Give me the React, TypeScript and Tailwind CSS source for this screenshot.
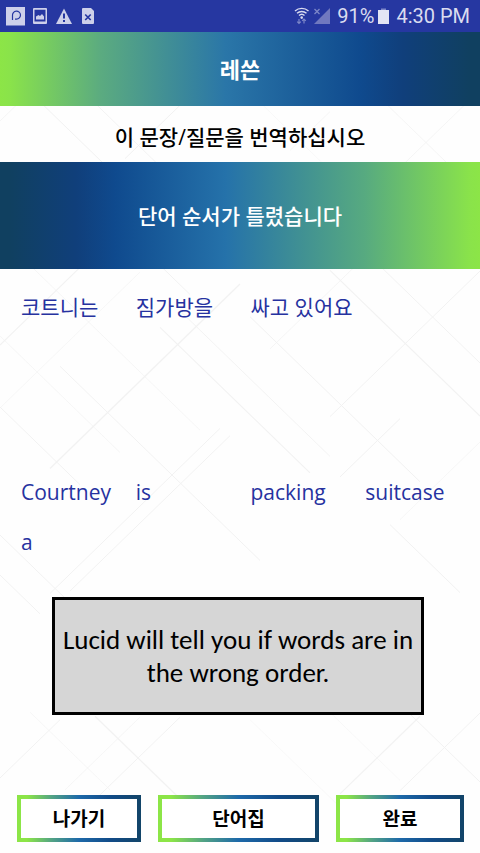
import React from "react";

const RISE = 466;

// Thin diagonals of the backdrop: [y at the left edge, x start, x end, line width]
const falling: [number, number, number, number][] = [
  [63, 35, 110, 1], [11, 90, 200, 0.9], [-271, 380, 480, 0.8], [-150, 260, 360, 0.5],
  [236, 30, 200, 0.7], [336, 0, 120, 0.7], [308, 60, 260, 1], [407, 0, 80, 1],
  [172, 160, 310, 1.1], [136, 180, 330, 0.9], [110, 140, 190, 1], [74, 250, 420, 1],
  [-50, 330, 480, 1.2], [-103, 380, 480, 1], [535, 0, 70, 1], [575, 0, 40, 1],
  [624, 95, 180, 1.2], [683, 30, 110, 0.6], [477, 250, 340, 0.5], [392, 330, 400, 0.5],
  [316, 410, 480, 1], [146, 390, 460, 1],
];
const rising: [number, number, number, number][] = [
  [121, 0, 25, 0.8], [280, 125, 180, 1], [432, 290, 330, 0.7], [556, 400, 480, 0.8],
  [345, 0, 80, 1.1], [408, 0, 140, 0.6], [517, 50, 240, 1.2], [611, 270, 360, 0.8],
  [642, 50, 220, 1], [659, 70, 230, 1], [737, 330, 480, 1], [807, 340, 400, 1],
  [908, 400, 480, 0.6], [778, 0, 60, 1], [853, 65, 140, 0.7], [892, 70, 180, 1],
  [1124, 340, 420, 1.1], [1179, 400, 480, 1],
];

function Backdrop() {
  const slope = RISE / 480;
  return (
    <svg
      className="absolute inset-0 -z-10 h-full w-full"
      viewBox="0 0 480 853"
      preserveAspectRatio="xMidYMid slice"
      aria-hidden="true"
      stroke="#f2f2f2"
      fill="none"
    >
      {falling.map(([c, a, b, w], i) => (
        <path key={"f" + i} strokeWidth={w} d={`M${a} ${c + slope * a}L${b} ${c + slope * b}`} />
      ))}
      {rising.map(([c, a, b, w], i) => (
        <path key={"r" + i} strokeWidth={w} d={`M${a} ${c - slope * a}L${b} ${c - slope * b}`} />
      ))}
    </svg>
  );
}

function StatusBar() {
  return (
    <div className="flex h-8 items-center justify-between bg-[#2637a1] pr-[10px] pl-[6px] font-['Roboto',sans-serif] text-xl text-[#dadcf0]">
      <svg width="90" height="32" viewBox="0 0 90 32" fill="#cdd0ea" aria-hidden="true">
        <path d="M0 7h19v18.500H0z" />
        <path d="M6.500 20v-4.500a4 4 0 1 1 4 3.600h-1.500" fill="none" stroke="#2637a1" strokeWidth="1.200" />
        <path fillRule="evenodd" d="M28 8h12a1 1 0 0 1 1 1v14a1 1 0 0 1-1 1H28a1 1 0 0 1-1-1V9a1 1 0 0 1 1-1zM28.500 9.700v11.800h11V9.700z" />
        <path d="M30 19.500v-3l2.500-1.500 1.500 1 2-2 2 2.500v3z" />
        <path d="M58 8.500 66 24H50z" />
        <path d="M57 13.500h2v5h-2zM57 20h2v2h-2z" fill="#2637a1" />
        <path d="M77 8h8l3 3v12a1 1 0 0 1-1 1H77a1 1 0 0 1-1-1V9a1 1 0 0 1 1-1z" />
        <path d="m79.200 14.500 5.500 5.500m0-5.500-5.500 5.500" stroke="#2637a1" strokeWidth="1.700" />
      </svg>
      <div className="flex items-center">
        <svg className="mr-[6px]" width="38" height="32" viewBox="0 0 38 32" fill="none" aria-hidden="true">
          <g stroke="#dadcf0" strokeWidth="1.400">
            <path d="M2 11a10 10 0 0 1 13.500 0M4 13.300a7 7 0 0 1 9.500 0M6 15.600a4 4 0 0 1 5.500 0" />
          </g>
          <circle cx="8.700" cy="17.600" r="1.300" fill="#dadcf0" />
          <path d="M6 19v4.500m-1.800-1.800L6 23.500l1.800-1.800M11 23.500V19m-1.800 1.800L11 19l1.800 1.800" stroke="#7d87c8" strokeWidth="1.200" />
          <path d="M37 8v16H21z" fill="#7078bf" />
          <path d="m21.500 9 5 5m0-5-5 5" stroke="#7d87c8" strokeWidth="1.300" />
        </svg>
        <span>91%</span>
        <svg className="mr-[7px] ml-1" width="11" height="32" viewBox="0 0 11 32" aria-hidden="true">
          <path d="M3 8.500h5v2H3z" fill="#7d87c8" />
          <path d="M0 10h11v14H0z" fill="#e3e4f4" />
        </svg>
        <span>4:30 PM</span>
      </div>
    </div>
  );
}

function Word({ children }: { children: React.ReactNode }) {
  return <button type="button" className="h-[50px] text-left whitespace-nowrap">{children}</button>;
}

function ActionButton({ children }: { children: React.ReactNode }) {
  return (
    <button
      type="button"
      className="h-[47px] bg-[linear-gradient(90deg,#8ce547_0%,#8ce547_8%,#52a384_28%,#1d69a9_50%,#114b88_75%,#124468_100%)] p-1"
    >
      <span className="flex h-full items-center justify-center bg-white pt-[2px] text-[19px] font-bold text-black">{children}</span>
    </button>
  );
}

export default function App() {
  return (
    <div className="relative isolate flex min-h-screen flex-col bg-[#fefefe] font-['Open_Sans','Noto_Sans_CJK_KR',sans-serif]">
      <Backdrop />
      <StatusBar />
      <header className="flex h-[74px] items-center justify-center bg-[linear-gradient(90deg,#8ce547_0%,#8ae34a_2%,#5bab80_21%,#2a76a8_47%,#0f4a8e_75%,#103f7b_84%,#104060_98%)]">
        <h1 className="text-[22px] font-bold text-white">레쓴</h1>
      </header>
      <main className="flex flex-1 flex-col">
        <h2 className="flex h-14 items-center justify-center pt-2 text-[21px] font-medium text-black">
          이 문장/질문을 번역하십시오
        </h2>
        <p className="flex h-[107px] items-center justify-center bg-[linear-gradient(270deg,#8ce547_0%,#8ae34a_2%,#57aa80_24%,#2572aa_53%,#0f4a8e_76%,#103f7b_84%,#104060_98%)] pt-[2px] text-[21px] font-medium text-white">
          단어 순서가 틀렸습니다
        </p>
        <div className="mt-[14px] grid grid-cols-4 pl-[21px] text-[21px] text-[#2632a0]">
          <Word>코트니는</Word>
          <Word>짐가방을</Word>
          <Word>싸고 있어요</Word>
        </div>
        <div className="mt-[135px] grid grid-cols-4 pl-[21px] text-[21px] text-[#2632a0]">
          <Word>Courtney</Word>
          <Word>is</Word>
          <Word>packing</Word>
          <Word>suitcase</Word>
          <Word>a</Word>
        </div>
        <div className="mt-[29px] flex justify-center pr-1">
          <p className="flex h-[118px] w-[372px] items-center justify-center border-[3px] border-black bg-[#d6d6d6] text-center font-['Carlito','Lato',sans-serif] text-[27px] leading-[33px] text-black">
            Lucid will tell you if words are in
            <br />
            the wrong order.
          </p>
        </div>
      </main>
      <footer className="grid grid-cols-[124fr_161fr_128fr] gap-[17px] pr-4 pb-[11px] pl-[17px]">
        <ActionButton>나가기</ActionButton>
        <ActionButton>단어집</ActionButton>
        <ActionButton>완료</ActionButton>
      </footer>
    </div>
  );
}
